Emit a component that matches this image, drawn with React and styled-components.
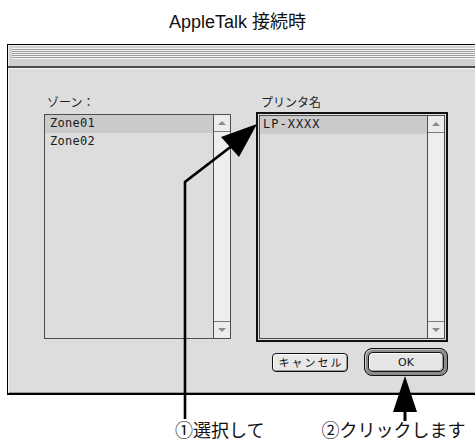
import React from "react";
import styled, { createGlobalStyle } from "styled-components";

const GlobalStyle = createGlobalStyle`
  html, body {
    margin: 0;
    padding: 0;
    background: #fff;
    overflow: hidden;
  }
  body {
    font-family: "Noto Sans CJK JP", "Liberation Sans", sans-serif;
  }
`;

const zones = ["Zone01", "Zone02"];
const printers = ["LP-XXXX"];

const App = () => {
  return (
    <Page>
      <GlobalStyle />
      <Caption>AppleTalk 接続時</Caption>
      <Window>
        <TitleBar>
          <Stripes />
        </TitleBar>
        <Body>
          <Panel>
            <Columns>
              <Field>
                <Label $indent={3} $gap={5}>
                  ゾーン：
                </Label>
                <ListBox $w={187} $h={225}>
                  <Items>
                    {zones.map((z, i) => (
                      <Row key={z} $selected={i === 0} $pad={5} $tracking={0.3}>
                        {z}
                      </Row>
                    ))}
                  </Items>
                  <Scrollbar>
                    <ScrollButton>
                      <Tri />
                    </ScrollButton>
                    <ScrollButton $bottom>
                      <Tri $down />
                    </ScrollButton>
                  </Scrollbar>
                </ListBox>
              </Field>
              <Field>
                <Label $indent={5} $gap={3}>
                  プリンタ名
                </Label>
                <FocusRing>
                  <ListBox $w={186} $h={224}>
                    <Items>
                      {printers.map((p, i) => (
                        <Row key={p} $selected={i === 0} $pad={3} $tracking={1}>
                          {p}
                        </Row>
                      ))}
                    </Items>
                    <Scrollbar>
                      <ScrollButton>
                        <Tri />
                      </ScrollButton>
                      <ScrollButton $bottom>
                        <Tri $down />
                      </ScrollButton>
                    </Scrollbar>
                  </ListBox>
                </FocusRing>
              </Field>
            </Columns>
            <ButtonRow>
              <CancelButton>キャンセル</CancelButton>
              <OkRing>
                <OkButton>OK</OkButton>
              </OkRing>
            </ButtonRow>
          </Panel>
        </Body>
      </Window>
      <Callouts>
        <Callout>①選択して</Callout>
        <Callout>②クリックします</Callout>
      </Callouts>
      <Arrows width="475" height="441" viewBox="0 0 475 441">
        <polyline
          points="185,419 185,182 233,145"
          fill="none"
          stroke="#000"
          strokeWidth="2.6"
        />
        <polygon points="257,124 221,137 239,157" fill="#000" />
        <line x1="405" y1="421" x2="405" y2="405" stroke="#000" strokeWidth="3" />
        <polygon points="405,376 393,412 417,412" fill="#000" />
      </Arrows>
    </Page>
  );
};

export default App;

const Page = styled.div`
  position: relative;
  width: 475px;
  height: 441px;
  overflow: hidden;
`;

const Caption = styled.h1`
  margin: 0;
  height: 44px;
  padding-top: 12px;
  box-sizing: border-box;
  text-align: center;
  font: normal 18px/20px "Liberation Sans", "Noto Sans CJK JP", sans-serif;
  color: #111;
`;

const Window = styled.section`
  margin-left: 7px;
  width: 500px;
  border-top: 1px solid #000;
  border-left: 1px solid #000;
  border-bottom: 2px solid #000;
  background: #dddddd;
`;

const TitleBar = styled.div`
  height: 23px;
  box-sizing: border-box;
  padding: 3px 0 0 4px;
  background: #d0d0d0;
  border-bottom: 2px solid #4a4a4a;
  box-shadow: inset 1px 1px 0 #ececec;
`;

const Stripes = styled.div`
  height: 11px;
  background: repeating-linear-gradient(
    to bottom,
    #f6f6f6 0 1px,
    #9c9c9c 1px 2px
  );
`;

const Body = styled.div`
  height: 325px;
  box-sizing: border-box;
  padding: 27px 0 0 36px;
  box-shadow: inset 1px 1px 0 #f6f6f6, inset 0 -1px 0 #9a9a9a;
`;

const Panel = styled.div`
  width: 404px;
  display: flex;
  flex-direction: column;
`;

const Columns = styled.div`
  display: flex;
  gap: 25px;
  align-items: flex-start;
`;

const Field = styled.div`
  display: flex;
  flex-direction: column;
`;

const Label = styled.div`
  height: 14px;
  padding-left: ${(p) => p.$indent}px;
  margin-bottom: ${(p) => p.$gap}px;
  font: 12px/14px "Noto Sans CJK JP", sans-serif;
  color: #222;
`;

const FocusRing = styled.div`
  border: 2px solid #111;
  padding: 1px;
  background: #dddddd;
`;

const ListBox = styled.div`
  width: ${(p) => p.$w}px;
  height: ${(p) => p.$h}px;
  box-sizing: border-box;
  border: 1px solid #4e4e4e;
  background: #dddddd;
  display: grid;
  grid-template-columns: 1fr 17px;
`;

const Items = styled.div`
  display: flex;
  flex-direction: column;
`;

const Row = styled.div`
  height: 18px;
  padding-left: ${(p) => p.$pad}px;
  font: 12px/17px "DejaVu Sans Mono", monospace;
  letter-spacing: ${(p) => p.$tracking}px;
  color: #1a1a1a;
  background: ${(p) => (p.$selected ? "#cbcbcb" : "transparent")};
`;

const Scrollbar = styled.div`
  display: flex;
  flex-direction: column;
  justify-content: space-between;
  border-left: 1px solid #4e4e4e;
  background: #eeeeee;
`;

const ScrollButton = styled.div`
  height: 17px;
  box-sizing: border-box;
  display: flex;
  align-items: center;
  justify-content: center;
  background: #ececec;
  ${(p) =>
    p.$bottom ? "border-top: 1px solid #7a7a7a;" : "border-bottom: 1px solid #7a7a7a;"}
`;

const Tri = styled.span`
  width: 0;
  height: 0;
  border-left: 4px solid transparent;
  border-right: 4px solid transparent;
  ${(p) =>
    p.$down ? "border-top: 4px solid #8a8a8a;" : "border-bottom: 4px solid #8a8a8a;"}
`;

const ButtonRow = styled.div`
  display: flex;
  justify-content: flex-end;
  align-items: center;
  gap: 16px;
  margin-top: 6px;
`;

const CancelButton = styled.div`
  width: 76px;
  height: 19px;
  box-sizing: border-box;
  display: flex;
  align-items: center;
  justify-content: center;
  border: 1px solid #111;
  border-radius: 4px;
  background: #e8e8e8;
  box-shadow: inset 1px 1px 0 #fff, inset -1px -1px 0 #9a9a9a;
  font: 11px/1 "Noto Sans CJK JP", sans-serif;
  letter-spacing: 2px;
  padding-left: 2px;
  color: #111;
`;

const OkRing = styled.div`
  width: 84px;
  height: 28px;
  box-sizing: border-box;
  display: flex;
  border: 1px solid #111;
  border-radius: 8px;
  padding: 3px;
  background: #8c8c8c;
  box-shadow: inset 1px 1px 0 #c4c4c4;
`;

const OkButton = styled.div`
  flex: 1;
  display: flex;
  align-items: center;
  justify-content: center;
  border: 1px solid #111;
  border-radius: 5px;
  background: #e6e6e6;
  box-shadow: inset 1px 1px 0 #fff, inset -1px -1px 0 #a0a0a0;
  font: 11px/1 "DejaVu Sans", sans-serif;
  color: #111;
`;

const Callouts = styled.div`
  display: flex;
  gap: 57px;
  margin-top: 25px;
  padding-left: 175px;
`;

const Callout = styled.div`
  font: 18px/18px "Noto Sans CJK JP", sans-serif;
  color: #111;
  white-space: nowrap;
`;

const Arrows = styled.svg`
  position: absolute;
  top: 0;
  left: 0;
  pointer-events: none;
`;
